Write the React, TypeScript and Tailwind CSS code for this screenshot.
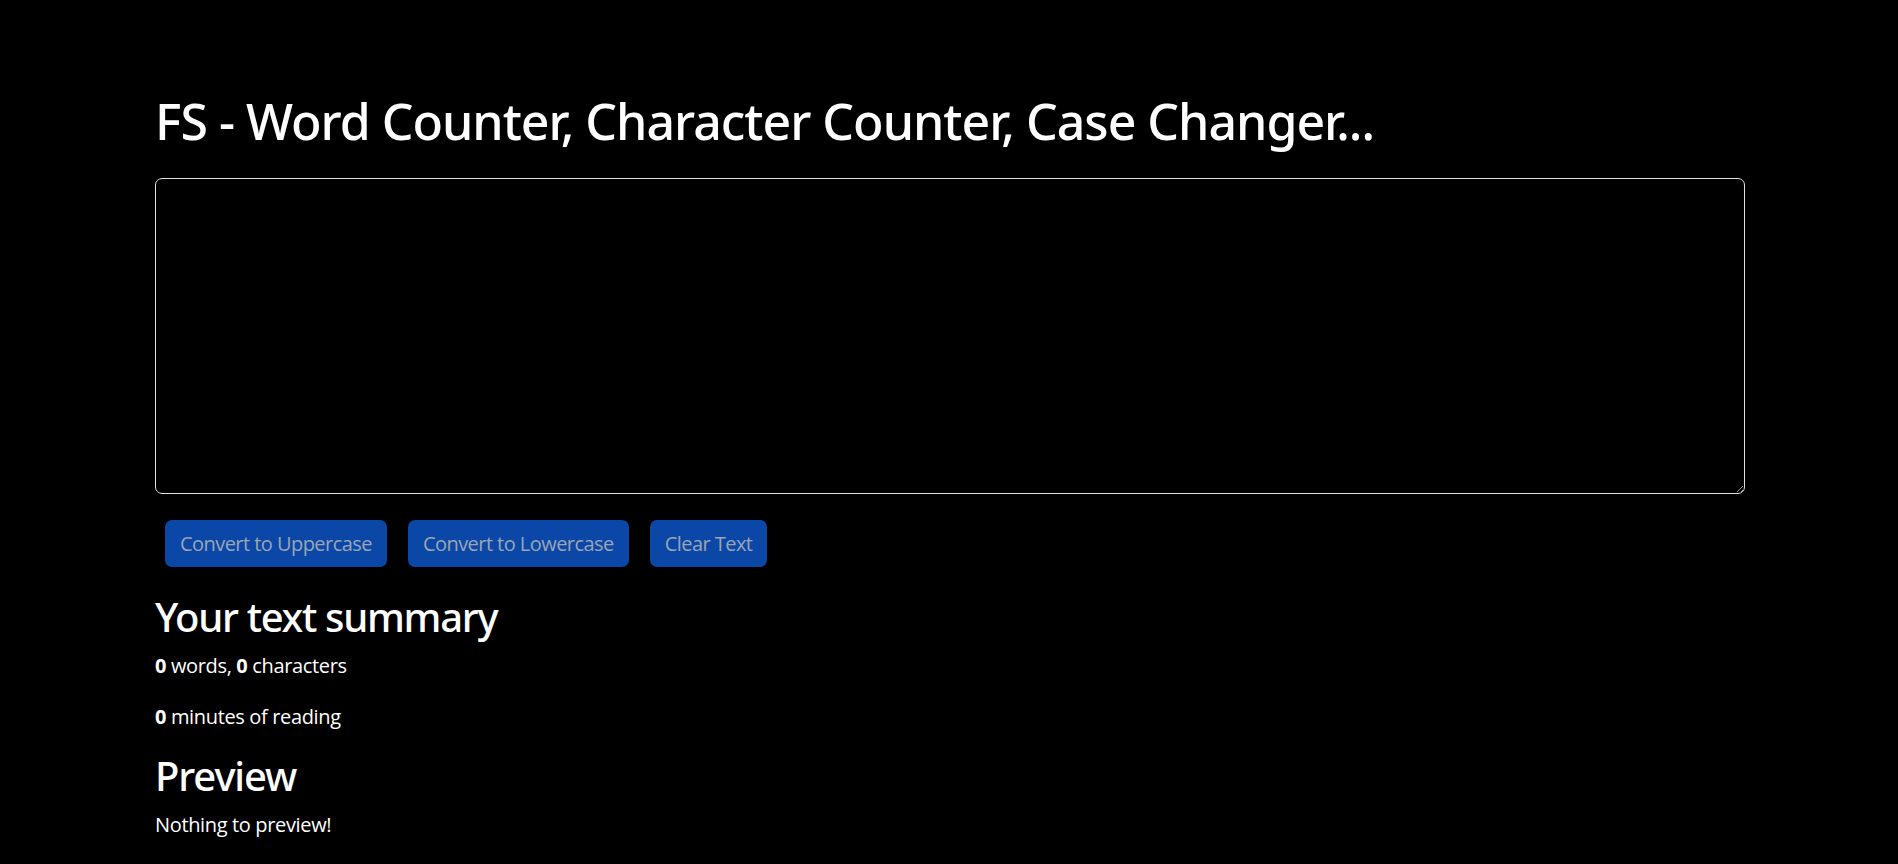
import React from "react";

export default function App() {
  const font = { fontFamily: '"Open Sans", "Noto Sans", sans-serif' };
  const head = { fontFamily: '"Noto Sans", "Open Sans", sans-serif' };
  const btn =
    "h-[47px] rounded-[7px] bg-[#0a47a6] px-[15px] text-[20px] leading-[30px] tracking-[-0.55px] text-[#9aa5b6]";
  return (
    <div className="min-h-[864px] w-full bg-black text-white" style={font}>
      <div className="ml-[155px] w-[1590px] pt-[91px]">
        <h1 className="m-0 text-[50px] font-medium leading-[60px] tracking-[-1px]" style={head}>
          FS - Word Counter, Character Counter, Case Changer...
        </h1>
        <textarea
          className="mt-[27px] block h-[316px] w-[1590px] resize-y rounded-[7px] border border-[#dee2e6] bg-black text-white"
          rows={8}
        />
        <div className="ml-[10px] mt-[26px] flex gap-[21px]">
          <button className={btn}>Convert to Uppercase</button>
          <button className={btn}>Convert to Lowercase</button>
          <button className={btn}>Clear Text</button>
        </div>
        <h2 className="mt-[26px] text-[40px] font-medium leading-[48px] tracking-[-1.3px]" style={head}>
          Your text summary
        </h2>
        <p className="mt-[10px] text-[20px] leading-[30px] tracking-[-0.35px]">
          <b>0</b> words, <b>0</b> characters
        </p>
        <p className="mt-[21px] text-[20px] leading-[30px] tracking-[-0.35px]">
          <b>0</b> minutes of reading
        </p>
        <h2 className="mt-[20px] text-[40px] font-medium leading-[48px] tracking-[-1.1px]" style={head}>
          Preview
        </h2>
        <p className="mt-[10px] text-[20px] leading-[30px] tracking-[-0.35px]">Nothing to preview!</p>
      </div>
    </div>
  );
}
